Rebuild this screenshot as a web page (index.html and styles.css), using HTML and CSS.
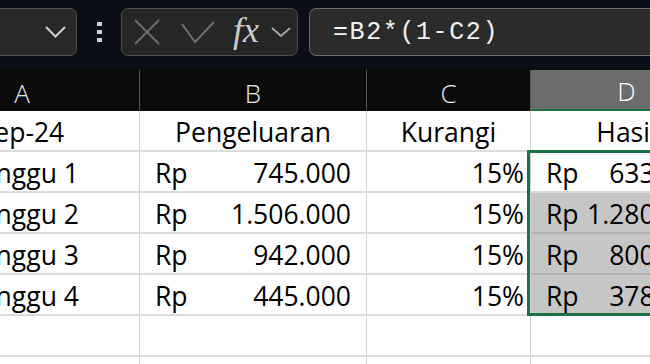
FILE: index.html
```html
<!DOCTYPE html>
<html lang="id">

<head>
    <meta charset="UTF-8">
    <meta name="viewport" content="width=device-width, initial-scale=1.0">
    <title>Pengeluaran Sep-24</title>
    <link rel="stylesheet" href="styles.css">
</head>

<body>
    <div class="formula-bar">
        <div class="name-box">
            <svg class="chevron" width="21" height="12" viewBox="0 0 21 12">
                <polyline points="1,1 10.5,10.5 20,1" />
            </svg>
        </div>

        <div class="dots"><span></span><span></span><span></span></div>

        <div class="fx-box">
            <svg class="icon-cancel" width="26" height="26" viewBox="0 0 26 26">
                <line x1="1" y1="1" x2="25" y2="25" />
                <line x1="25" y1="1" x2="1" y2="25" />
            </svg>
            <svg class="icon-enter" width="34" height="23" viewBox="0 0 34 23">
                <polyline points="1,3 14,21 33,1" />
            </svg>
            <span class="fx">fx</span>
            <svg class="chevron small" width="20" height="10" viewBox="0 0 20 10">
                <polyline points="1,1 10,9 19,1" />
            </svg>
        </div>

        <div class="formula-input">=B2*(1-C2)</div>
    </div>

    <div class="sheet">
        <!-- kolom -->
        <div class="col-head">A</div>
        <div class="col-head">B</div>
        <div class="col-head">C</div>
        <div class="col-head active">D</div>

        <div class="cell center">Sep-24</div>
        <div class="cell center">Pengeluaran</div>
        <div class="cell center">Kurangi</div>
        <div class="cell center">Hasil</div>

        <div class="cell center">Minggu 1</div>
        <div class="cell money"><span>Rp</span><span>745.000</span></div>
        <div class="cell num">15%</div>
        <div class="cell money"><span>Rp</span><span>633.250</span></div>

        <div class="cell center">Minggu 2</div>
        <div class="cell money"><span>Rp</span><span>1.506.000</span></div>
        <div class="cell num">15%</div>
        <div class="cell money selected"><span>Rp</span><span>1.280.100</span></div>

        <div class="cell center">Minggu 3</div>
        <div class="cell money"><span>Rp</span><span>942.000</span></div>
        <div class="cell num">15%</div>
        <div class="cell money selected"><span>Rp</span><span>800.700</span></div>

        <div class="cell center">Minggu 4</div>
        <div class="cell money"><span>Rp</span><span>445.000</span></div>
        <div class="cell num">15%</div>
        <div class="cell money selected"><span>Rp</span><span>378.250</span></div>

        <div class="cell"></div>
        <div class="cell"></div>
        <div class="cell"></div>
        <div class="cell"></div>

        <div class="cell"></div>
        <div class="cell"></div>
        <div class="cell"></div>
        <div class="cell"></div>

        <div class="selection"></div>
    </div>
</body>

</html>
```

FILE: styles.css
```css
body {
    margin: 0;
    padding: 0;
    overflow: hidden;
    background-color: #fff;
    font-family: 'Open Sans', 'Noto Sans', sans-serif;
}

/* bilah rumus */
.formula-bar {
    display: flex;
    align-items: flex-start;
    height: 70px;
    padding-top: 8px;
    box-sizing: border-box;
    background-color: #0b0e16;
}

.name-box {
    display: flex;
    align-items: center;
    justify-content: flex-end;
    width: 100px;
    height: 48px;
    margin-left: -23px;
    padding-right: 10px;
    box-sizing: border-box;
    background-color: #292929;
    border: 1px solid #575757;
    border-radius: 7px;
}

.chevron polyline {
    fill: none;
    stroke: #cfcfcf;
    stroke-width: 2;
}

.chevron.small polyline {
    stroke: #a9a9a9;
    stroke-width: 1.8;
}

.dots {
    display: flex;
    flex-direction: column;
    gap: 4px;
    margin: 14px 0 0 20px;
}

.dots span {
    display: block;
    width: 5px;
    height: 4px;
    background-color: #cfcfcf;
}

.fx-box {
    display: flex;
    align-items: center;
    width: 177px;
    height: 48px;
    margin-left: 19px;
    padding-left: 12px;
    box-sizing: border-box;
    background-color: #262626;
    border: 1px solid #4d4d4d;
    border-radius: 7px;
}

.icon-cancel line,
.icon-enter polyline {
    fill: none;
    stroke: #6f6f6f;
    stroke-width: 2;
}

.icon-enter {
    margin-left: 21px;
}

.fx {
    margin-left: 18px;
    margin-top: -4px;
    font-family: 'Liberation Serif', serif;
    font-style: italic;
    font-size: 36px;
    line-height: 40px;
    color: #cbcbcb;
}

.chevron.small {
    margin-left: 12px;
}

.formula-input {
    flex: 1;
    height: 48px;
    margin: 0 -20px 0 11px;
    padding-left: 23px;
    box-sizing: border-box;
    background-color: #2b2b2b;
    border: 1px solid #6a6a6a;
    border-radius: 7px;
    font-family: 'Liberation Mono', monospace;
    font-size: 25px;
    letter-spacing: 1.6px;
    line-height: 48px;
    color: #f2f2f2;
}

/* lembar kerja */
.sheet {
    position: relative;
    display: grid;
    grid-template-columns: 235px 227px 164px 192px;
    grid-auto-rows: 41px;
    margin-left: -95px;
}

.col-head {
    display: flex;
    align-items: flex-end;
    justify-content: center;
    background-color: #0a0a0a;
    border-right: 1px solid #565656;
    font-size: 26px;
    font-weight: 300;
    line-height: 36px;
    color: #ececec;
}

.col-head.active {
    background-color: #6b6b6b;
    border-bottom: 2px solid #1e7145;
    color: #fff;
}

.cell {
    display: flex;
    align-items: flex-end;
    border-right: 1px solid #d2d2d2;
    border-bottom: 2px solid #dcdcdc;
    font-size: 26.5px;
    line-height: 36px;
    color: #000;
    white-space: nowrap;
}

.cell.center {
    justify-content: center;
}

.cell.num {
    justify-content: flex-end;
    padding-right: 6px;
}

.cell.money {
    justify-content: space-between;
    padding: 0 15px;
}

.cell.selected {
    background-color: #c6c6c6;
    border-bottom-color: #b0b0b0;
}

.selection {
    position: absolute;
    left: 622px;
    top: 80px;
    width: 300px;
    height: 166px;
    box-sizing: border-box;
    border: 3px solid #1e7145;
    pointer-events: none;
}
```
